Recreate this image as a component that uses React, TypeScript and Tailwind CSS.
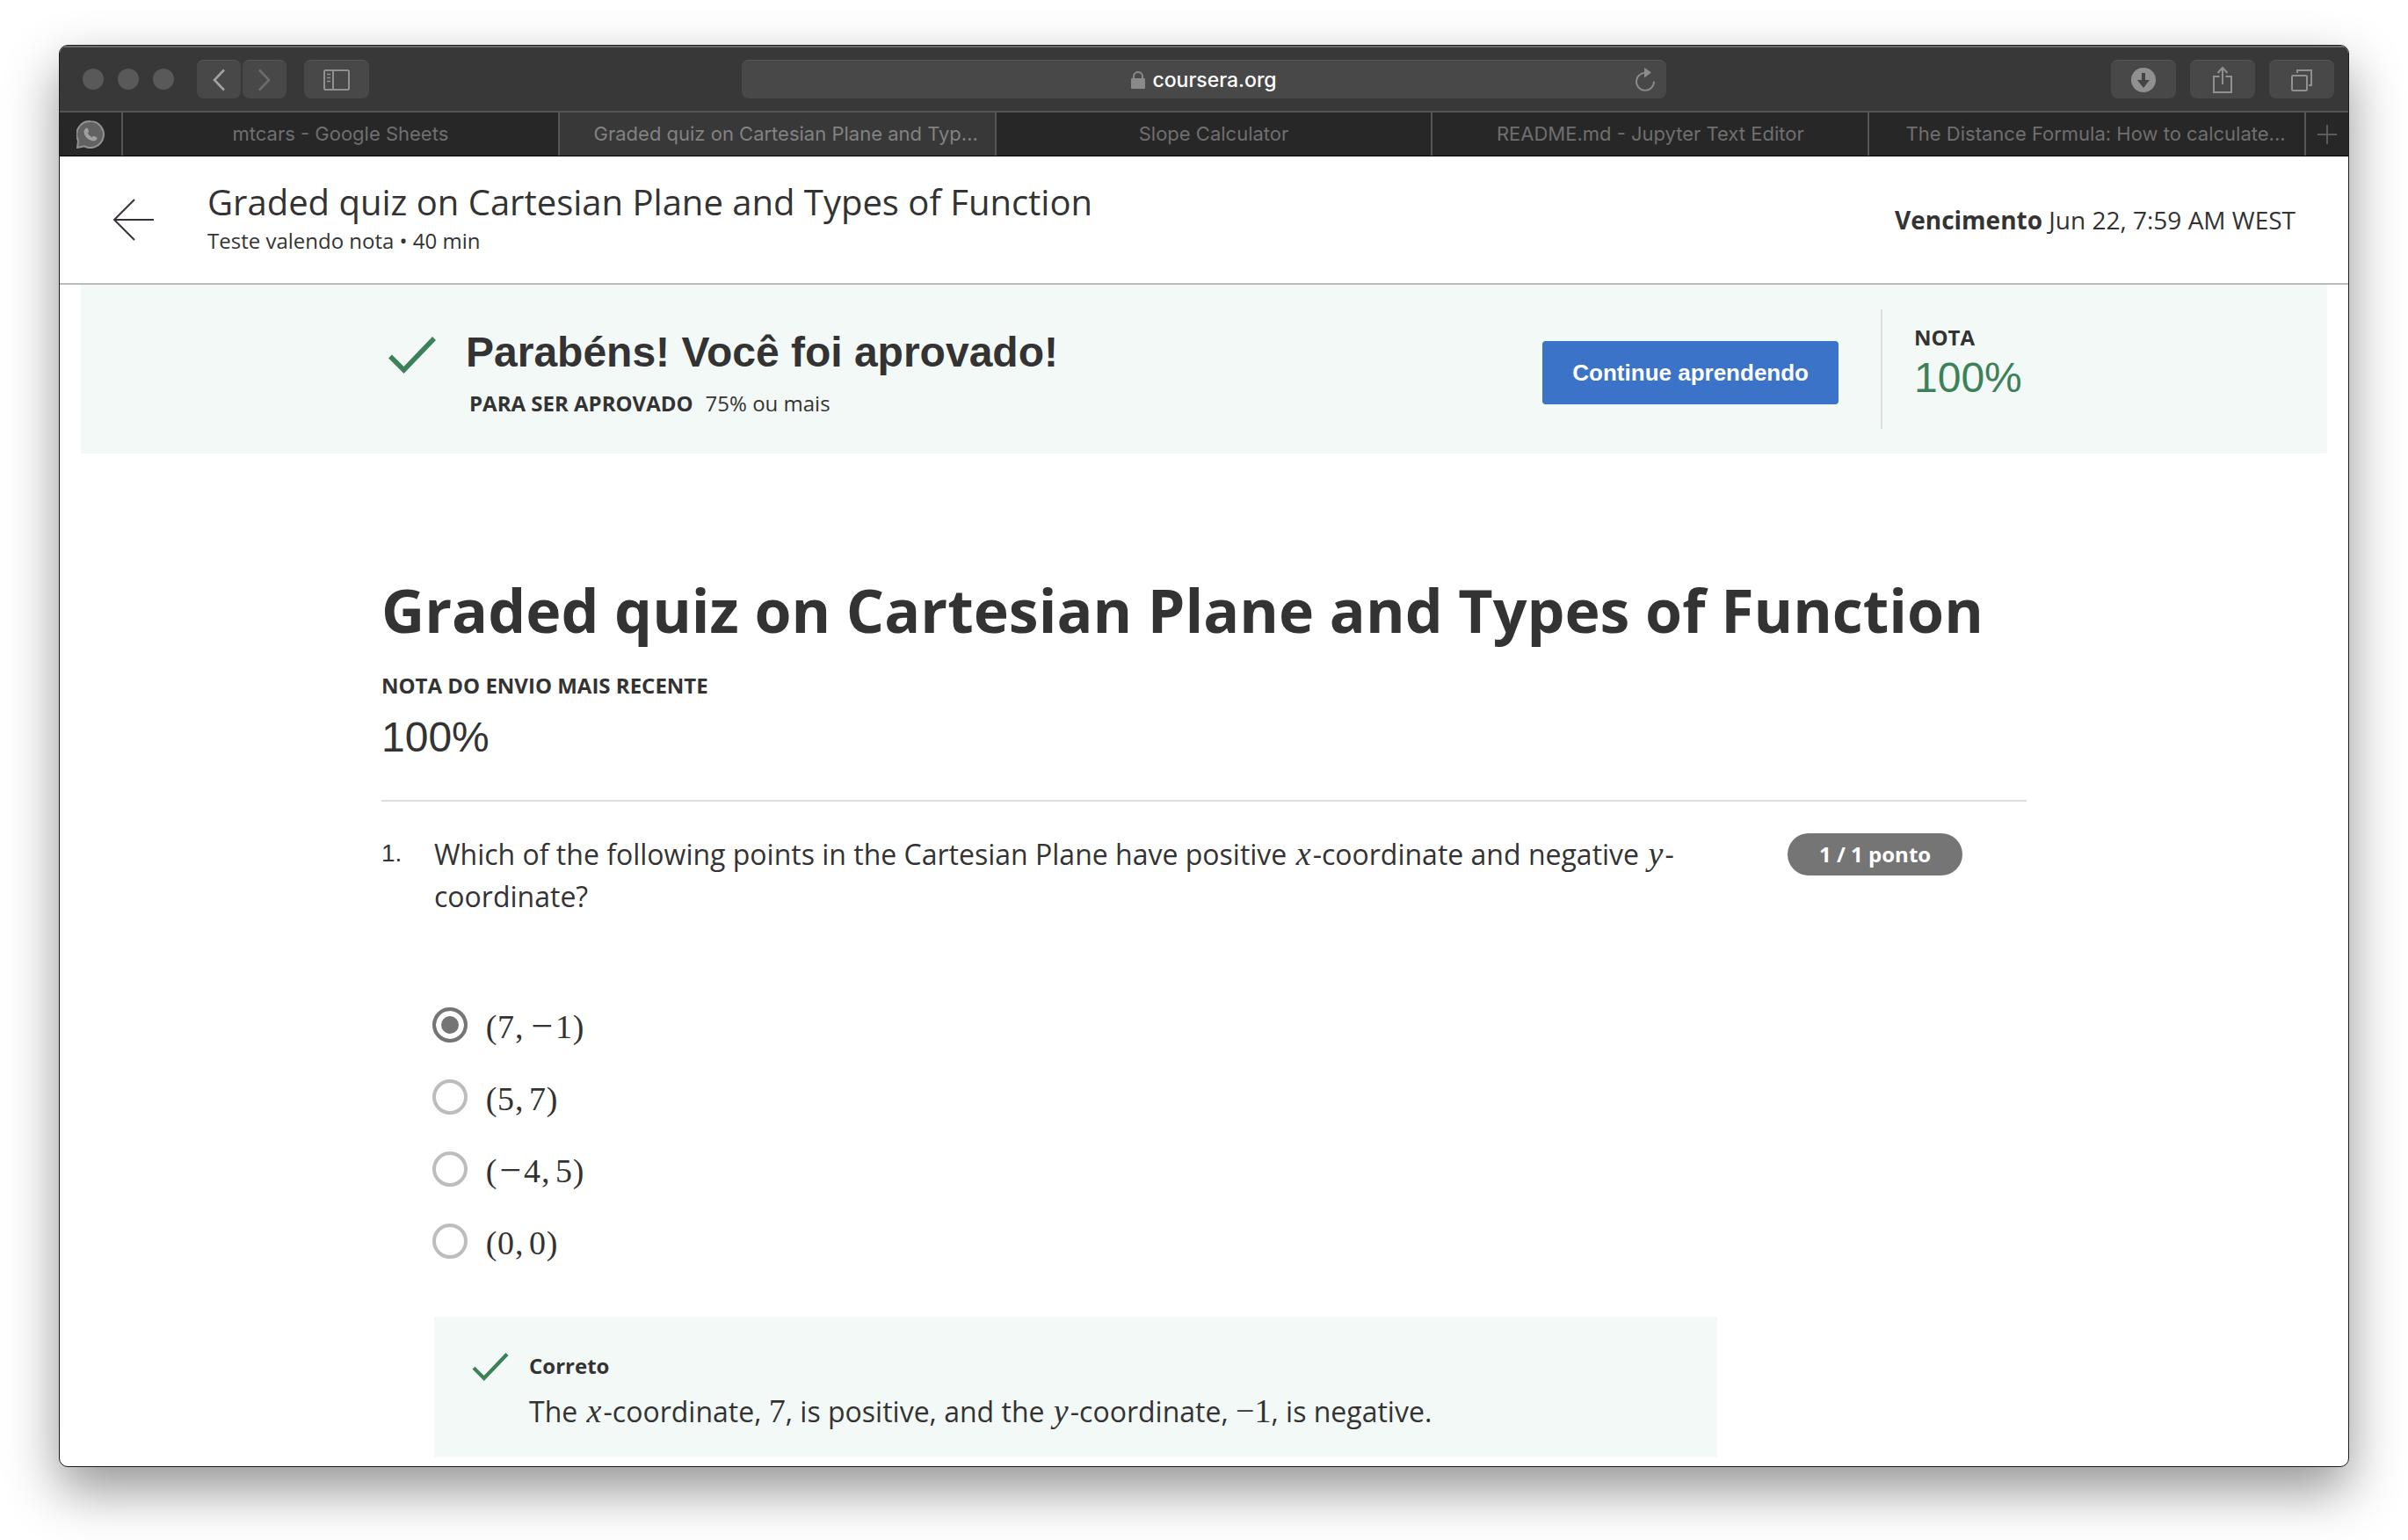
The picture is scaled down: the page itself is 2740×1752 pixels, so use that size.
import type { ReactNode } from "react";

const tabs = [
  { title: "mtcars - Google Sheets" },
  { title: "Graded quiz on Cartesian Plane and Typ...", active: true },
  { title: "Slope Calculator" },
  { title: "README.md - Jupyter Text Editor" },
  { title: "The Distance Formula: How to calculate...", wide: true },
];

const options = [
  { id: "p1", tokens: ["(", "7", ",", "−", "1", ")"], checked: true },
  { id: "p2", tokens: ["(", "5", ",", "7", ")"] },
  { id: "p3", tokens: ["(", "−", "4", ",", "5", ")"] },
  { id: "p4", tokens: ["(", "0", ",", "0", ")"] },
];

function tokenClass(token: string) {
  if (token === "(" || token === ")") return "w-[14px] text-center";
  if (token === ",") return "w-[17px] pl-px";
  if (token === "−") return "w-[30px] text-center text-[44px]";
  return "w-[19px] text-center";
}

function MathRow({ tokens }: { tokens: string[] }) {
  return (
    <span className="flex font-['Liberation_Serif',serif] text-[38px] leading-[48px]">
      {tokens.map((token, i) => (
        <span key={i} className={tokenClass(token)}>
          {token}
        </span>
      ))}
    </span>
  );
}

function Variable({ children }: { children: ReactNode }) {
  return (
    <i className="inline-block w-[21px] text-center font-['Liberation_Serif',serif] text-[38px] leading-none">
      {children}
    </i>
  );
}

function Num({ children }: { children: ReactNode }) {
  return <span className="font-['Liberation_Serif',serif] text-[38px] leading-none">{children}</span>;
}

function ToolButton({ label, wide, children }: { label: string; wide?: boolean; children: ReactNode }) {
  return (
    <button
      aria-label={label}
      className={
        wide
          ? "flex h-11 w-[74px] items-center justify-center rounded-lg border-t border-[#565656] bg-[#484848] text-[#909090]"
          : "flex h-11 w-[50px] items-center justify-center rounded-lg border-t border-[#565656] bg-[#484848] text-[#a2a2a2]"
      }
    >
      {children}
    </button>
  );
}

function Check({ className }: { className: string }) {
  return (
    <svg viewBox="0 0 54 42" className={className} fill="none" stroke="#3d8158" strokeWidth="5.500" aria-hidden="true">
      <path d="M2 22.500 17.500 38 52 2" />
    </svg>
  );
}

function Toolbar() {
  return (
    <div className="flex h-[74px] items-center border-t-2 border-[#6a6c6b] bg-[#383838] px-4">
      <div className="flex flex-1 items-center">
        <div className="ml-[10px] flex gap-4">
          <span className="size-6 rounded-full bg-[#595959]" />
          <span className="size-6 rounded-full bg-[#595959]" />
          <span className="size-6 rounded-full bg-[#595959]" />
        </div>
        <div className="ml-[26px] flex gap-0.5">
          <ToolButton label="Voltar">
            <svg viewBox="0 0 50 44" className="h-11 w-[50px]" fill="none" stroke="currentColor" strokeWidth="2.600">
              <path d="M31 10.500 20 22 31 33.500" />
            </svg>
          </ToolButton>
          <ToolButton label="Avançar">
            <svg viewBox="0 0 50 44" className="h-11 w-[50px]" fill="none" stroke="#6c6c6c" strokeWidth="2.600">
              <path d="M19 10.500 30 22 19 33.500" />
            </svg>
          </ToolButton>
        </div>
        <div className="ml-5">
          <ToolButton label="Barra lateral" wide>
            <svg viewBox="0 0 30 24" className="h-6 w-[30px]" fill="none" stroke="currentColor" strokeWidth="2">
              <rect x="1" y="1" width="28" height="22" rx="1.500" />
              <path d="M11 1v22" />
              <path d="M4 5.500h4M4 9.500h4M4 13.500h4" strokeWidth="1.500" />
            </svg>
          </ToolButton>
        </div>
      </div>
      <div className="relative flex h-11 w-[1052px] items-center justify-center gap-2 rounded-lg border-t border-[#565656] bg-[#484848]">
        <svg viewBox="0 0 16 20" className="h-5 w-4" aria-hidden="true">
          <rect x="0" y="8" width="16" height="12" rx="1" fill="#8a8a8a" />
          <path d="M3 9V6a5 5 0 0 1 10 0v3" fill="none" stroke="#8a8a8a" strokeWidth="2" />
        </svg>
        <input
          aria-label="Endereço"
          defaultValue="coursera.org"
          className="field-sizing-content bg-transparent font-['Inter',sans-serif] text-[23px] leading-8 font-medium text-white"
        />
        <button aria-label="Recarregar" className="absolute right-3 text-[#8c8c8c]">
          <svg viewBox="0 0 24 28" className="h-7 w-6" fill="none" stroke="currentColor" strokeWidth="1.800">
            <path d="M14 6.100A10 10 0 1 0 22 15.500" />
            <path d="M11 0v11.500l8-6z" fill="currentColor" stroke="none" />
          </svg>
        </button>
      </div>
      <div className="flex flex-1 justify-end gap-4">
        <ToolButton label="Downloads" wide>
          <svg viewBox="0 0 28 28" className="size-7">
            <circle cx="14" cy="14" r="14" fill="currentColor" />
            <path d="M12 6h4v8h5l-7 9-7-9h5z" fill="#444" />
          </svg>
        </ToolButton>
        <ToolButton label="Compartilhar" wide>
          <svg viewBox="0 0 24 32" className="h-8 w-6" fill="none" stroke="currentColor" strokeWidth="2">
            <path d="M8.500 12H2v18h20V12h-6.500M12 21V2M6.500 8 12 2l5.500 6" />
          </svg>
        </ToolButton>
        <ToolButton label="Mostrar abas" wide>
          <svg viewBox="0 0 26 26" className="size-[26px]" fill="none" stroke="currentColor" strokeWidth="2">
            <rect x="2" y="8" width="17" height="17" rx="1.500" />
            <path d="M8 5V2h16v17h-3" />
          </svg>
        </ToolButton>
      </div>
    </div>
  );
}

function TabBar() {
  return (
    <div className="flex h-[52px] border-t-2 border-b border-t-[#555] border-b-black bg-[#272727] font-['Inter',sans-serif] text-[22px] text-[#6f6f6f]">
      <button aria-label="WhatsApp" className="flex w-[72px] items-center justify-center border-r-2 border-[#555]">
        <svg viewBox="0 0 32 32" className="size-8">
          <path d="M16 1a15 15 0 1 1-7 28.300L1 31l1-8A15 15 0 0 1 16 1z" fill="#626262" stroke="#929292" strokeWidth="2" />
          <path
            d="M10.500 9c1-.8 2-.5 2.500.5l1 2.500c.2.800-.3 1.500-1.200 2.500 1.200 2.200 2.700 3.700 5 4.700.9-1.200 1.600-1.700 2.500-1.300l2.400 1.200c.9.500.9 1.100.5 2.100-.8 1.800-3 2.500-5 2-5.500-1.400-9-5-9.700-9.900-.1-1.700.7-3.200 2-4.300z"
            fill="#a0a0a0"
          />
        </svg>
      </button>
      <div className="grid flex-1 grid-cols-5">
        {tabs.map((tab) => (
          <button
            key={tab.title}
            className={
              tab.active
                ? "truncate border-r-2 border-[#555] bg-[#383838] pl-5 text-[#828282]"
                : tab.wide
                  ? "truncate border-r-2 border-[#555] pl-5"
                  : "truncate border-r-2 border-[#555]"
            }
          >
            {tab.title}
          </button>
        ))}
      </div>
      <button aria-label="Nova aba" className="flex w-12 items-center justify-center">
        <svg viewBox="0 0 22 22" className="size-[22px]" stroke="#5c5c5c" strokeWidth="2">
          <path d="M11 0v22M0 11h22" />
        </svg>
      </button>
    </div>
  );
}

function QuizHeader() {
  return (
    <header className="flex h-[146px] items-center border-b-2 border-[#bbb] px-[60px]">
      <button aria-label="Voltar ao curso">
        <svg viewBox="0 0 48 48" className="size-12" fill="none" stroke="#382f3c" strokeWidth="2">
          <path d="M47 24H2M25 1 2 24l23 23" />
        </svg>
      </button>
      <div className="ml-[60px] flex-1">
        <p className="text-[40px] leading-[48px]">Graded quiz on Cartesian Plane and Types of Function</p>
        <p className="text-[24px] leading-10">Teste valendo nota • 40 min</p>
      </div>
      <p className="text-[28px] leading-9">
        <strong>Vencimento</strong> Jun 22, 7:59 AM WEST
      </p>
    </header>
  );
}

function ResultBanner() {
  return (
    <section className="mx-6 bg-[#f3f9f7]">
      <div className="mx-auto flex h-48 max-w-[1872px] items-center">
        <div className="mt-2 ml-2 flex flex-1 gap-[34px]">
          <Check className="mt-3 h-[42px] w-[54px]" />
          <div>
            <h2 className="font-['Liberation_Sans',sans-serif] text-[48px] leading-[60px] font-bold">
              Parabéns! Você foi aprovado!
            </h2>
            <p className="mt-[10px] ml-1 text-[24px] leading-9">
              <strong className="mr-[14px]">PARA SER APROVADO</strong>75% ou mais
            </p>
          </div>
        </div>
        <button className="mt-2 h-[72px] rounded-[4px] bg-[#3a73c8] px-[34px] font-['Liberation_Sans',sans-serif] text-[26px] font-bold text-white">
          Continue aprendendo
        </button>
        <div className="ml-12 flex h-[136px] w-[166px] flex-col border-l-2 border-[#ddd] pt-4 pl-9">
          <p className="text-[24px] leading-8 font-bold">NOTA</p>
          <p className="font-['Liberation_Sans',sans-serif] text-[48px] leading-[60px] text-[#3d8158]">100%</p>
        </div>
      </div>
    </section>
  );
}

function Question() {
  return (
    <div className="flex items-start border-t-2 border-[#ddd] pt-9">
      <span className="w-[60px] font-['Liberation_Sans',sans-serif] text-[28px] leading-[46px]">1.</span>
      <div className="w-[1460px]">
        <fieldset>
          <legend className="text-[32px] leading-[48px]">
            Which of the following points in the Cartesian Plane have positive <Variable>x</Variable>-coordinate and
            negative <Variable>y</Variable>-
            <wbr />
            coordinate?
          </legend>
          <div className="mt-[98px] flex flex-col gap-[34px]">
            {options.map((option) => (
              <div key={option.id} className="flex h-12 items-center">
                <input
                  type="radio"
                  name="point"
                  id={option.id}
                  defaultChecked={option.checked}
                  className="mr-5 ml-[-2px] size-10 appearance-none rounded-full border-4 border-[#bdbdbd] bg-white checked:border-[#757575] checked:bg-[#757575] checked:shadow-[inset_0_0_0_6px_white]"
                />
                <label htmlFor={option.id} className="pt-1">
                  <MathRow tokens={option.tokens} />
                </label>
              </div>
            ))}
          </div>
        </fieldset>
        <div className="mt-[62px] flex h-40 gap-[23px] bg-[#f3f9f7] pt-10 pl-[43px]">
          <Check className="mt-px h-8 w-[42px]" />
          <div>
            <p className="text-[24px] leading-8 font-bold">Correto</p>
            <p className="mt-2 text-[32px] leading-[56px]">
              The <Variable>x</Variable>-coordinate, <Num>7</Num>, is positive, and the <Variable>y</Variable>
              -coordinate, <Num>−</Num>
              <Num>1</Num>, is negative.
            </p>
          </div>
        </div>
      </div>
      <span className="ml-20 rounded-full bg-[#757575] px-9 text-[24px] leading-[48px] font-bold text-white">
        1 / 1 ponto
      </span>
    </div>
  );
}

export default function App() {
  return (
    <div className="bg-white px-[67px] pt-[51px] pb-[83px] font-['Open_Sans',sans-serif] text-[#333]">
      <div className="overflow-hidden rounded-[10px] border border-[#1c1c1c] bg-white shadow-[0_26px_60px_rgba(0,0,0,0.42)]">
        <Toolbar />
        <TabBar />
        <QuizHeader />
        <ResultBanner />
        <main className="mx-auto max-w-[1872px] pb-[10px]">
          <h1 className="pt-[130px] text-[68px] leading-[96px] font-bold">
            Graded quiz on Cartesian Plane and Types of Function
          </h1>
          <p className="mt-5 text-[24px] leading-9 font-bold">NOTA DO ENVIO MAIS RECENTE</p>
          <p className="mt-2 mb-[38px] font-['Liberation_Sans',sans-serif] text-[48px] leading-[66px]">100%</p>
          <Question />
        </main>
      </div>
    </div>
  );
}
